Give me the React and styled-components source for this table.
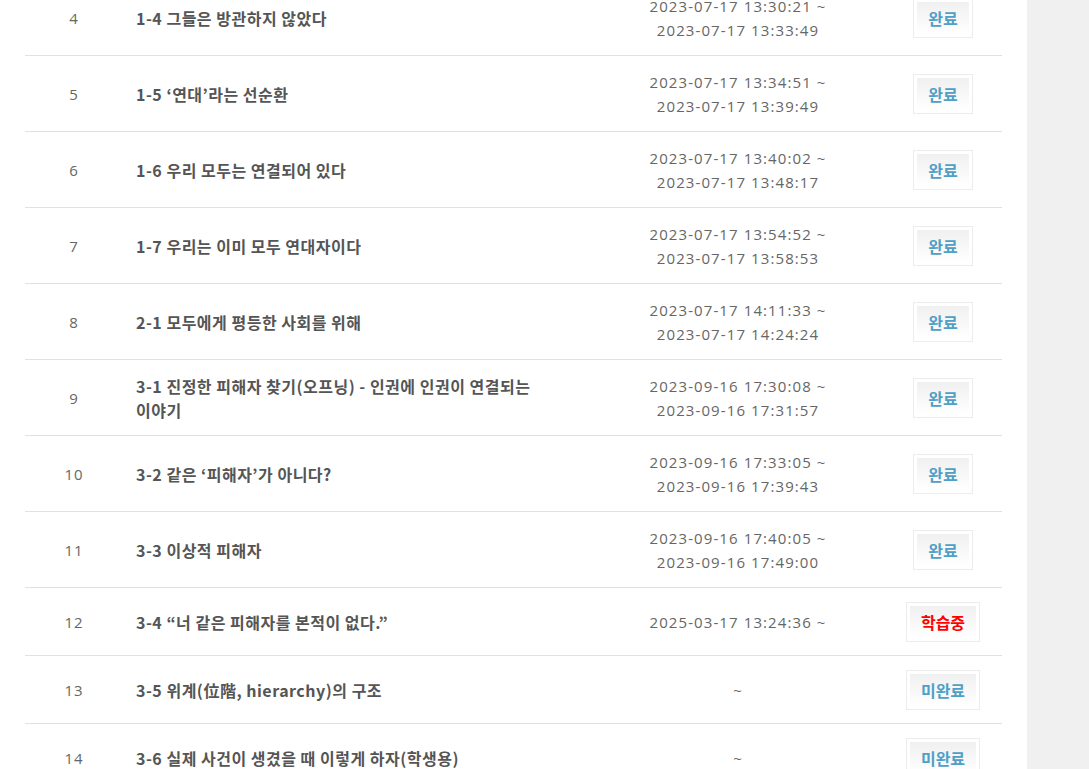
import React from "react";
import styled, { createGlobalStyle } from "styled-components";

const GlobalStyle = createGlobalStyle`
  html, body {
    margin: 0;
    padding: 0;
    background: #f0f0f0;
    overflow: hidden;
  }
  body {
    font-family: "Open Sans", "Noto Sans CJK KR", sans-serif;
  }
`;

const Page = styled.div`
  display: flex;
  height: 769px;
`;

const Main = styled.div`
  width: 1027px;
  background: #fff;
  padding-left: 25px;
  box-sizing: border-box;
  overflow: hidden;
`;

const Table = styled.div`
  width: 977px;
  margin-top: -20px;
`;

const Row = styled.div`
  display: grid;
  grid-template-columns: 98px 469px 292px 118px;
  align-items: center;
  padding: 14px 0 13px;
  border-bottom: 1px solid #e1e1e1;
`;

const Num = styled.div`
  text-align: center;
  font-family: "Open Sans", sans-serif;
  font-size: 15px;
  letter-spacing: 1px;
  color: #666;
`;

const Title = styled.div`
  padding-left: 13px;
  font-family: "Noto Sans CJK KR", sans-serif;
  font-weight: 700;
  font-size: 16px;
  letter-spacing: 0.5px;
  line-height: 24px;
  color: #555;
  max-width: 420px;
  word-break: keep-all;
`;

const DateCell = styled.div`
  text-align: center;
  font-family: "Open Sans", sans-serif;
  font-size: 15px;
  letter-spacing: 1.1px;
  line-height: 24px;
  color: #666;
`;

const BadgeCell = styled.div`
  display: flex;
  justify-content: center;
`;

const Badge = styled.span`
  display: inline-block;
  box-sizing: border-box;
  height: 40px;
  border: 1px solid #ececec;
  padding: 3px;
  background: linear-gradient(#f0f0f0, #fff) content-box, #fff;
  font-family: "Noto Sans CJK KR", sans-serif;
  font-weight: 700;
  font-size: 16px;
  line-height: 32px;
  color: ${(p) => (p.$state === "ing" ? "#ff0000" : "#4f9fc6")};

  & > span {
    display: block;
    padding: 0 11px;
  }
`;

const rows = [
  { n: 4, t: "1-4 그들은 방관하지 않았다", d: ["2023-07-17 13:30:21 ~", "2023-07-17 13:33:49"], s: "done" },
  { n: 5, t: "1-5 ‘연대’라는 선순환", d: ["2023-07-17 13:34:51 ~", "2023-07-17 13:39:49"], s: "done" },
  { n: 6, t: "1-6 우리 모두는 연결되어 있다", d: ["2023-07-17 13:40:02 ~", "2023-07-17 13:48:17"], s: "done" },
  { n: 7, t: "1-7 우리는 이미 모두 연대자이다", d: ["2023-07-17 13:54:52 ~", "2023-07-17 13:58:53"], s: "done" },
  { n: 8, t: "2-1 모두에게 평등한 사회를 위해", d: ["2023-07-17 14:11:33 ~", "2023-07-17 14:24:24"], s: "done" },
  { n: 9, t: "3-1 진정한 피해자 찾기(오프닝) - 인권에 인권이 연결되는 이야기", d: ["2023-09-16 17:30:08 ~", "2023-09-16 17:31:57"], s: "done" },
  { n: 10, t: "3-2 같은 ‘피해자’가 아니다?", d: ["2023-09-16 17:33:05 ~", "2023-09-16 17:39:43"], s: "done" },
  { n: 11, t: "3-3 이상적 피해자", d: ["2023-09-16 17:40:05 ~", "2023-09-16 17:49:00"], s: "done" },
  { n: 12, t: "3-4 “너 같은 피해자를 본적이 없다.”", d: ["2025-03-17 13:24:36 ~"], s: "ing" },
  { n: 13, t: "3-5 위계(位階, hierarchy)의 구조", d: ["~"], s: "none" },
  { n: 14, t: "3-6 실제 사건이 생겼을 때 이렇게 하자(학생용)", d: ["~"], s: "none" },
];

const labels = { done: "완료", ing: "학습중", none: "미완료" };

export default function App() {
  return (
    <>
      <GlobalStyle />
      <Page>
        <Main>
          <Table>
            {rows.map((r) => (
              <Row key={r.n}>
                <Num>{r.n}</Num>
                <Title>{r.t}</Title>
                <DateCell>
                  {r.d.map((line, i) => (
                    <div key={i}>{line}</div>
                  ))}
                </DateCell>
                <BadgeCell>
                  <Badge $state={r.s}>
                    <span>{labels[r.s]}</span>
                  </Badge>
                </BadgeCell>
              </Row>
            ))}
          </Table>
        </Main>
      </Page>
    </>
  );
}
